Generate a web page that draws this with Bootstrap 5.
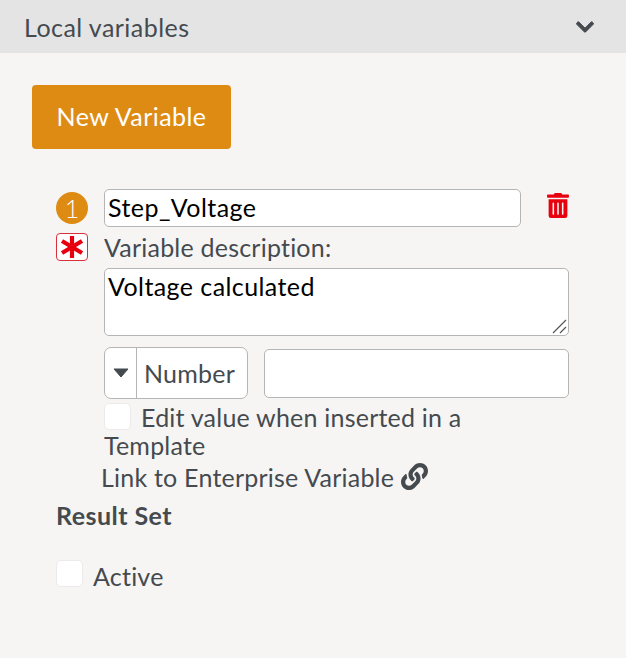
<!DOCTYPE html>
<html lang="en">
<head>
<meta charset="utf-8">
<title>Local variables</title>
<link rel="stylesheet" href="https://cdn.jsdelivr.net/npm/bootstrap@5.3.0/dist/css/bootstrap.min.css">
<style>
html, body { height: 100%; }
body { background: #fff; font-family: "Lato", "Liberation Sans", sans-serif; font-size: 25px; letter-spacing: .22px; color: #454a4f; overflow: hidden; }
.vars-panel { width: 626px; height: 658px; background: #f6f5f4; }
.vars-head { height: 53px; background: #e4e4e4; padding: 0 32px 0 24px; }
.vars-title { font-size: 25px; line-height: 28px; letter-spacing: .45px; }
.vars-body { padding: 32px 0 0 32px; }
.btn-newvar { width: 199px; height: 64px; padding: 0; background: #de8b14; border: 0; border-radius: 4px; color: #fff; font-size: 25px; letter-spacing: .45px; }
.var-block { margin: 40px 0 0 24px; width: 513px; }
.var-side { width: 48px; flex: none; }
.var-main { width: 465px; }
.num-dot { width: 32px; height: 32px; margin-top: 3px; border-radius: 50%; background: #de8b14; color: #fff; font-size: 25px; font-weight: 300; line-height: 32px; text-align: center; letter-spacing: 0; }
.req-box { width: 32px; height: 28px; margin-top: 9px; border: 1px solid #d9303a; border-radius: 4px; background: #fff; display: flex; align-items: center; justify-content: center; }
.name-input { width: 417px; height: 38px; padding: 0 3px 3px; border: 1px solid #b5b5b5; border-radius: 5px; background: #fff; color: #000; font-size: 25px; letter-spacing: .45px; outline: 0; }
.desc-label { margin: 5px 0 5px; line-height: 31px; }
.desc-wrap { position: relative; }
.desc-area { display: block; width: 465px; height: 68px; padding: 1px 3px 0; border: 1px solid #b5b5b5; border-radius: 5px; background: #fff; color: #000; font-size: 25px; letter-spacing: .42px; line-height: 33px; outline: 0; resize: none; }
.desc-grip { position: absolute; right: 2px; bottom: 2px; }
.type-row { margin-top: 11px; }
.type-group { width: 144px; height: 52px; border: 1px solid #b5b5b5; border-radius: 7px; background: #fff; }
.type-caret { width: 32px; border-right: 1px solid #b5b5b5; }
.type-name { flex: 1; padding-left: 7px; line-height: 50px; }
.val-input { width: 305px; height: 49px; margin-left: 16px; margin-top: 2px; border: 1px solid #b5b5b5; border-radius: 5px; background: #fff; outline: 0; }
.tick { appearance: none; display: inline-block; width: 27px; height: 27px; margin: 0; border: 1px solid #eceaea; border-radius: 5px; background: #fff; vertical-align: top; }
.edit-line { margin-top: 4px; padding-right: 16px; line-height: 28px; }
.edit-line .tick { margin-right: 10px; }
.link-line { margin: 4px 0 0 -3px; line-height: 28px; }
.link-line svg { vertical-align: -3px; }
.result-title { margin: 9px 0 0; font-size: 25px; font-weight: 700; line-height: 30px; letter-spacing: .45px; }
.active-line { margin-top: 30px; line-height: 32px; }
.active-line .tick { margin-right: 10px; }
</style>
</head>
<body>
<div class="vars-panel">
  <div class="vars-head d-flex align-items-center justify-content-between">
    <span class="vars-title">Local variables</span>
    <svg width="18" height="20" viewBox="0 0 448 512" fill="#454a4f" stroke="#454a4f" stroke-width="24" aria-hidden="true"><path d="M207.029 381.476L12.686 187.132c-9.373-9.373-9.373-24.569 0-33.941l22.667-22.667c9.357-9.357 24.522-9.375 33.901-.04L224 284.505l154.745-154.021c9.379-9.335 24.544-9.317 33.901.04l22.667 22.667c9.373 9.373 9.373 24.569 0 33.941L240.971 381.476c-9.373 9.372-24.569 9.372-33.942 0z"/></svg>
  </div>
  <div class="vars-body">
    <button type="button" class="btn btn-newvar">New Variable</button>
    <div class="var-block">
      <div class="d-flex">
        <div class="var-side">
          <div class="num-dot">1</div>
          <div class="req-box">
            <svg width="26" height="24" viewBox="0 0 26 24" aria-hidden="true"><g stroke="#e8000f" stroke-width="4.2" fill="none"><path d="M13 1v22"/><path d="M3 6l20 12"/><path d="M23 6L3 18"/></g></svg>
          </div>
        </div>
        <div class="var-main">
          <div class="d-flex justify-content-between align-items-start">
            <input class="name-input" type="text" value="Step_Voltage">
            <svg class="mt-1" width="22" height="25" viewBox="0 0 448 512" fill="#e8000f" aria-hidden="true"><path d="M32 464a48 48 0 0 0 48 48h288a48 48 0 0 0 48-48V128H32zm272-256a16 16 0 0 1 32 0v224a16 16 0 0 1-32 0zm-96 0a16 16 0 0 1 32 0v224a16 16 0 0 1-32 0zm-96 0a16 16 0 0 1 32 0v224a16 16 0 0 1-32 0zM432 32H312l-9.4-18.7A24 24 0 0 0 281.1 0H166.8a23.72 23.72 0 0 0-21.4 13.3L136 32H16A16 16 0 0 0 0 48v32a16 16 0 0 0 16 16h416a16 16 0 0 0 16-16V48a16 16 0 0 0-16-16z"/></svg>
          </div>
          <div class="desc-label">Variable description:</div>
          <div class="desc-wrap">
            <textarea class="desc-area">Voltage calculated</textarea>
            <svg class="desc-grip" width="15" height="15" viewBox="0 0 15 15" aria-hidden="true"><path d="M1 14L14 1M8 14l6-6" stroke="#555" stroke-width="1.2" fill="none"/></svg>
          </div>
          <div class="type-row d-flex align-items-start">
            <div class="type-group d-flex">
              <div class="type-caret d-flex align-items-center justify-content-center">
                <svg width="16" height="10" viewBox="0 0 16 10" aria-hidden="true"><path d="M1 1h14L8 9z" fill="#454a4f" stroke="#454a4f" stroke-linejoin="round"/></svg>
              </div>
              <div class="type-name">Number</div>
            </div>
            <input class="val-input" type="text" aria-label="Value">
          </div>
          <div class="edit-line"><input class="tick" type="checkbox" aria-label="Edit value">Edit value when inserted in a Template</div>
          <div class="link-line">Link to Enterprise Variable <svg width="27" height="27" viewBox="0 0 512 512" fill="#454a4f" aria-hidden="true"><path d="M326.612 185.391c59.747 59.809 58.927 155.698.36 214.59-.11.12-.24.25-.36.37l-67.2 67.2c-59.27 59.27-155.699 59.262-214.96 0-59.27-59.26-59.27-155.7 0-214.96l37.106-37.106c9.84-9.84 26.786-3.3 27.294 10.606.648 17.722 3.826 35.527 9.69 52.721 1.986 5.822.567 12.262-3.783 16.612l-13.087 13.087c-28.026 28.026-28.905 73.66-1.155 101.96 28.024 28.579 74.086 28.749 102.325.51l67.2-67.19c28.191-28.191 28.073-73.757 0-101.83-3.701-3.694-7.429-6.564-10.341-8.569a16.037 16.037 0 0 1-6.947-12.606c-.396-10.567 3.348-21.456 11.698-29.806l21.054-21.055c5.521-5.521 14.182-6.199 20.584-1.731a152.482 152.482 0 0 1 20.522 17.197zM467.547 44.449c-59.261-59.262-155.69-59.27-214.96 0l-67.2 67.2c-.12.12-.25.25-.36.37-58.566 58.892-59.387 154.781.36 214.59a152.454 152.454 0 0 0 20.521 17.196c6.402 4.468 15.064 3.789 20.584-1.731l21.054-21.055c8.35-8.35 12.094-19.239 11.698-29.806a16.037 16.037 0 0 0-6.947-12.606c-2.912-2.005-6.64-4.875-10.341-8.569-28.073-28.073-28.191-73.639 0-101.83l67.2-67.19c28.239-28.239 74.3-28.069 102.325.51 27.75 28.3 26.872 73.934-1.155 101.96l-13.087 13.087c-4.35 4.35-5.769 10.79-3.783 16.612 5.864 17.194 9.042 34.999 9.69 52.721.509 13.906 17.454 20.446 27.294 10.606l37.106-37.106c59.271-59.259 59.271-155.699.001-214.959z"/></svg></div>
        </div>
      </div>
      <div class="result-title">Result Set</div>
      <div class="active-line"><input class="tick" type="checkbox" aria-label="Active">Active</div>
    </div>
  </div>
</div>
<script src="https://cdn.jsdelivr.net/npm/bootstrap@5.3.0/dist/js/bootstrap.bundle.min.js"></script>
</body>
</html>
